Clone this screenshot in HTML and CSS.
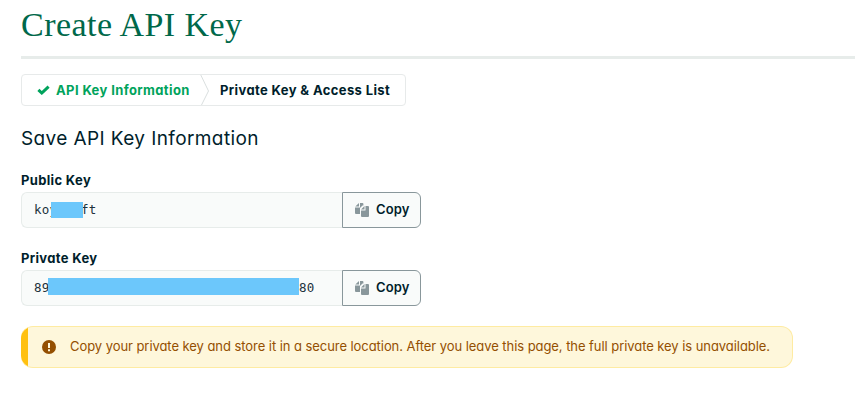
FILE: index.html
```html
<!DOCTYPE html>
<html lang="en">
<head>
<meta charset="utf-8">
<title>Create API Key</title>
<link rel="stylesheet" href="styles.css">
</head>
<body>
<svg class="defs" width="0" height="0" aria-hidden="true">
  <symbol id="copy" viewBox="0 0 14 14">
    <path fill="currentColor" d="M4 0V3.5H.3ZM5 0H7.5Q8.4 0 8.4 1V2.4H7.5L5 5V11H1Q0 11 0 10V4.5H5ZM9.5 3V6.5H6ZM10.5 3H13Q14 3 14 4V13Q14 14 13 14H7Q6 14 6 13V7.5H10.5Z"/>
  </symbol>
</svg>
<header class="header"><h1 class="title">Create API Key</h1></header>
<main class="content">
  <ol class="steps">
    <li class="step done">
      <svg class="check" width="13" height="10" viewBox="0 0 13 10"><path d="M1.4 4.8l3.4 3.2L11.6 1.6" fill="none" stroke="currentColor" stroke-width="3"/></svg>
      <span class="step-done-text">API Key Information</span>
    </li>
    <li class="divider"><svg width="10" height="30" viewBox="0 0 10 30"><path d="M.8 0L8.5 16L1.5 30" fill="none" stroke="#dadfdf"/></svg></li>
    <li class="step"><span class="step-text">Private Key &amp; Access List</span></li>
  </ol>
  <h2 class="subtitle">Save API Key Information</h2>
  <section class="field">
    <h3 class="label label-public">Public Key</h3>
    <div class="row">
      <div class="value"><span>koy</span><span class="mask mask-public"></span><span>ft</span></div>
      <button class="copy"><svg class="copy-icon" width="14" height="14"><use href="#copy"/></svg><span class="copy-text">Copy</span></button>
    </div>
  </section>
  <section class="field">
    <h3 class="label label-private">Private Key</h3>
    <div class="row">
      <div class="value"><span>89</span><span class="mask mask-private"></span><span>80</span></div>
      <button class="copy"><svg class="copy-icon" width="14" height="14"><use href="#copy"/></svg><span class="copy-text">Copy</span></button>
    </div>
  </section>
  <div class="banner">
    <svg class="alert" width="14" height="14" viewBox="0 0 14 14"><circle cx="7" cy="7" r="7" fill="#944f01"/><path d="M6 3h2v5H6zM6 9.3h2v2H6z" fill="#fef7db"/></svg>
    <span class="message">Copy your private key and store it in a secure location. After you leave this page, the full private key is unavailable.</span>
  </div>
</main>
</body>
</html>
```
FILE: styles.css
```css
* { box-sizing: border-box; }
body { margin: 0; background: #fff; color: #001e2b; font-family: Inter, sans-serif; font-size: 13px; font-feature-settings: "cv11"; overflow: hidden; }
h1, h2, h3, ol { margin: 0; padding: 0; }
.defs { display: block; }
.header { margin-left: 21px; height: 59px; border-bottom: 3px solid #e7ecea; }
.title { font: 400 34px/50px "Liberation Serif", serif; color: #00684a; letter-spacing: .45px; white-space: nowrap; }
.content { padding: 15px 0 0 21px; }
.steps { display: flex; align-items: center; width: 385px; height: 32px; border: 1px solid #e7eaea; border-radius: 4px; list-style: none; font-weight: 700; white-space: nowrap; letter-spacing: .38px; }
.step { display: flex; align-items: center; }
.done { width: 178px; padding-left: 15px; gap: 6px; color: #00a35c; }
.divider { display: flex; width: 20px; }
.subtitle { margin-top: 19px; font-size: 19px; line-height: 28px; font-weight: 400; white-space: nowrap; letter-spacing: .4px; }
.field { height: 78px; }
.subtitle + .field { margin-top: 19px; }
.label { font-size: 13px; line-height: 16px; font-weight: 700; margin-bottom: 4px; letter-spacing: .34px; }
.row { display: flex; width: 400px; height: 36px; }
.value { display: flex; align-items: center; width: 321px; padding: 0 0 1px 12px; background: #f9fbfa; border: 1px solid #e7ecea; border-right: 0; border-radius: 6px 0 0 6px; font: 12.5px "DejaVu Sans Mono", monospace; letter-spacing: .28px; color: #21313c; }
.mask { background: #6cc7fb; position: relative; }
.mask-public { width: 32px; height: 16px; margin: 0 -2px 0 -6.4px; }
.mask-private { width: 251px; height: 17px; margin: 0 0 2px -1.6px; }
.copy { display: flex; align-items: center; gap: 7px; width: 79px; height: 36px; padding: 0 0 0 12px; background: #f9fbfa; border: 1px solid #89979b; border-radius: 0 6px 6px 0; color: #001e2b; font: 600 13px Inter, sans-serif; font-feature-settings: "cv11"; letter-spacing: .15px; }
.copy-text { padding-bottom: 2px; }
.copy-icon { color: #89979b; }
.banner { display: flex; align-items: center; width: 772px; height: 42px; margin-top: -2px; padding-left: 21px; gap: 14px; border: 1px solid #feeba2; border-left: 0; border-radius: 12px; background: linear-gradient(90deg, #ffc010 7px, #fef7db 7px); color: #944f01; white-space: nowrap; letter-spacing: -.06px; }
.message { padding-bottom: 2px; }
```
